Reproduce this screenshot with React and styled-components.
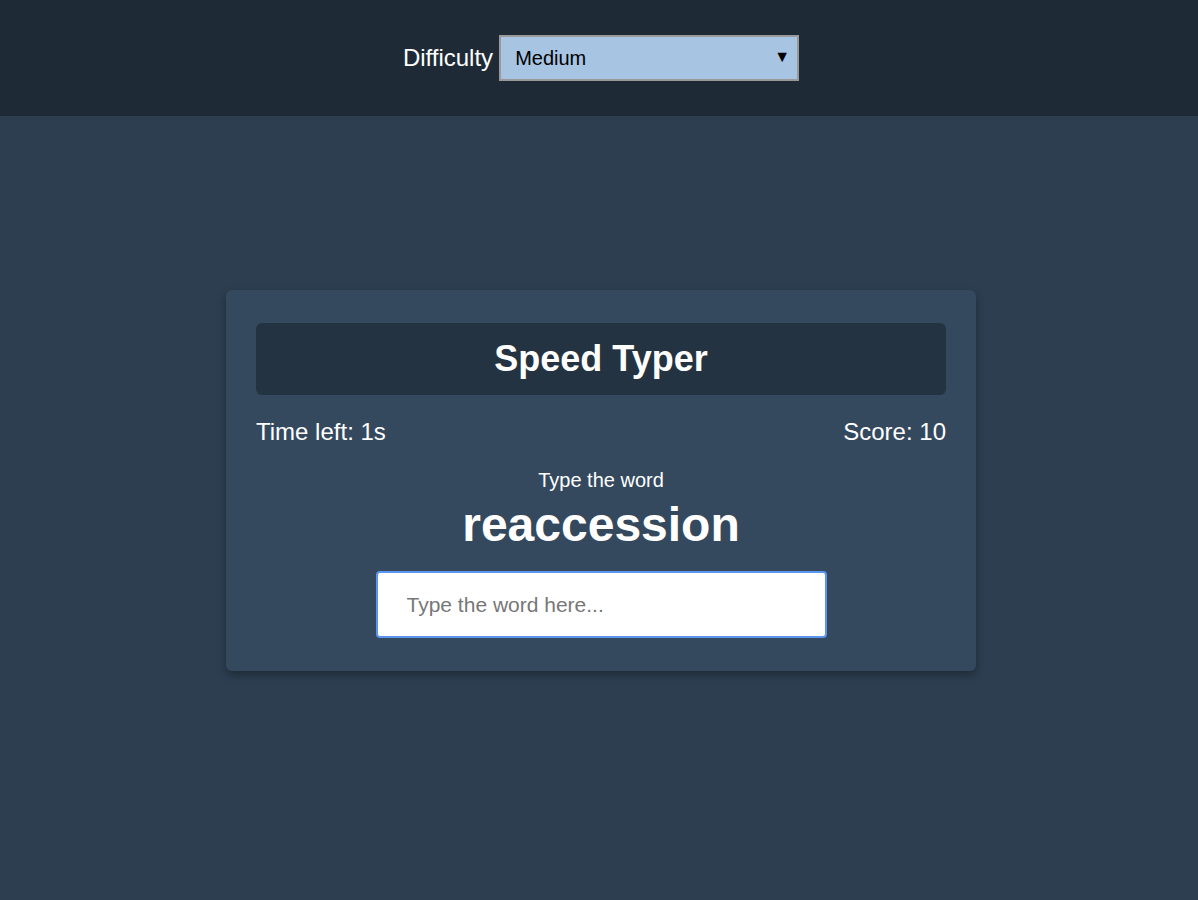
import React from "react"
import styled, { createGlobalStyle } from "styled-components"

const GlobalStyle = createGlobalStyle`
  * {
    box-sizing: border-box;
  }
  body {
    margin: 0;
    background-color: #2c3e50;
    font-family: "Liberation Sans", Arial, sans-serif;
    min-height: 100vh;
  }
`

const App = () => (
  <Page>
    <GlobalStyle />
    <Settings>
      <Label htmlFor="difficulty">Difficulty</Label>
      <SelectWrap>
        <Select id="difficulty" defaultValue="medium">
          <option value="easy">Easy</option>
          <option value="medium">Medium</option>
          <option value="hard">Hard</option>
        </Select>
        <Arrow>▼</Arrow>
      </SelectWrap>
    </Settings>

    <Main>
      <Container>
        <Title>Speed Typer</Title>
        <Stats>
          <span>Time left: 1s</span>
          <span>Score: 10</span>
        </Stats>
        <Prompt>Type the word</Prompt>
        <Word>reaccession</Word>
        <WordInput placeholder="Type the word here..." autoFocus />
      </Container>
    </Main>
  </Page>
)

const Page = styled.div`
  min-height: 900px;
  padding-left: 4px;
`

const Settings = styled.div`
  height: 116px;
  margin-left: -4px;
  padding-left: 4px;
  background-color: rgba(0, 0, 0, 0.3);
  color: #fff;
  display: flex;
  align-items: center;
  justify-content: center;
  gap: 6px;
`

const Label = styled.label`
  font-size: 24px;
`

const SelectWrap = styled.div`
  position: relative;
  width: 300px;
  height: 46px;
`

const Select = styled.select`
  width: 100%;
  height: 100%;
  appearance: none;
  border: 2px solid #999;
  border-radius: 0;
  background-color: #a7c5e3;
  font-family: "Liberation Sans", Arial, sans-serif;
  font-size: 20px;
  color: #000;
  padding: 0 14px;
  outline: none;
`

const Arrow = styled.span`
  position: absolute;
  right: 9px;
  top: 14px;
  font-size: 16px;
  line-height: 1;
  color: #000;
  pointer-events: none;
`

const Main = styled.main`
  display: flex;
  justify-content: center;
  padding-top: 174px;
`

const Container = styled.div`
  width: 750px;
  background-color: #34495e;
  padding: 33px 30px 33px;
  border-radius: 6px;
  box-shadow: 0 4px 8px rgba(0, 0, 0, 0.3);
  color: #fff;
  text-align: center;
  display: flex;
  flex-direction: column;
  align-items: center;
`

const Title = styled.h2`
  width: 100%;
  height: 72px;
  margin: 0;
  background-color: rgba(0, 0, 0, 0.3);
  border-radius: 6px;
  font-size: 36px;
  font-weight: bold;
  display: flex;
  align-items: center;
  justify-content: center;
`

const Stats = styled.div`
  width: 100%;
  display: flex;
  justify-content: space-between;
  font-size: 24px;
  margin-top: 23px;
`

const Prompt = styled.small`
  font-size: 20px;
  margin-top: 23px;
`

const Word = styled.h1`
  font-size: 48px;
  font-weight: bold;
  margin: 5px 0 0;
`

const WordInput = styled.input`
  width: 451px;
  height: 67px;
  margin-top: 19px;
  border: 2px solid #5b95f0;
  border-radius: 4px;
  outline: none;
  padding: 0 29px;
  font-family: "Liberation Sans", Arial, sans-serif;
  font-size: 21px;
  color: #000;
  caret-color: #000;

  &::placeholder {
    color: #777;
  }
`

export default App
